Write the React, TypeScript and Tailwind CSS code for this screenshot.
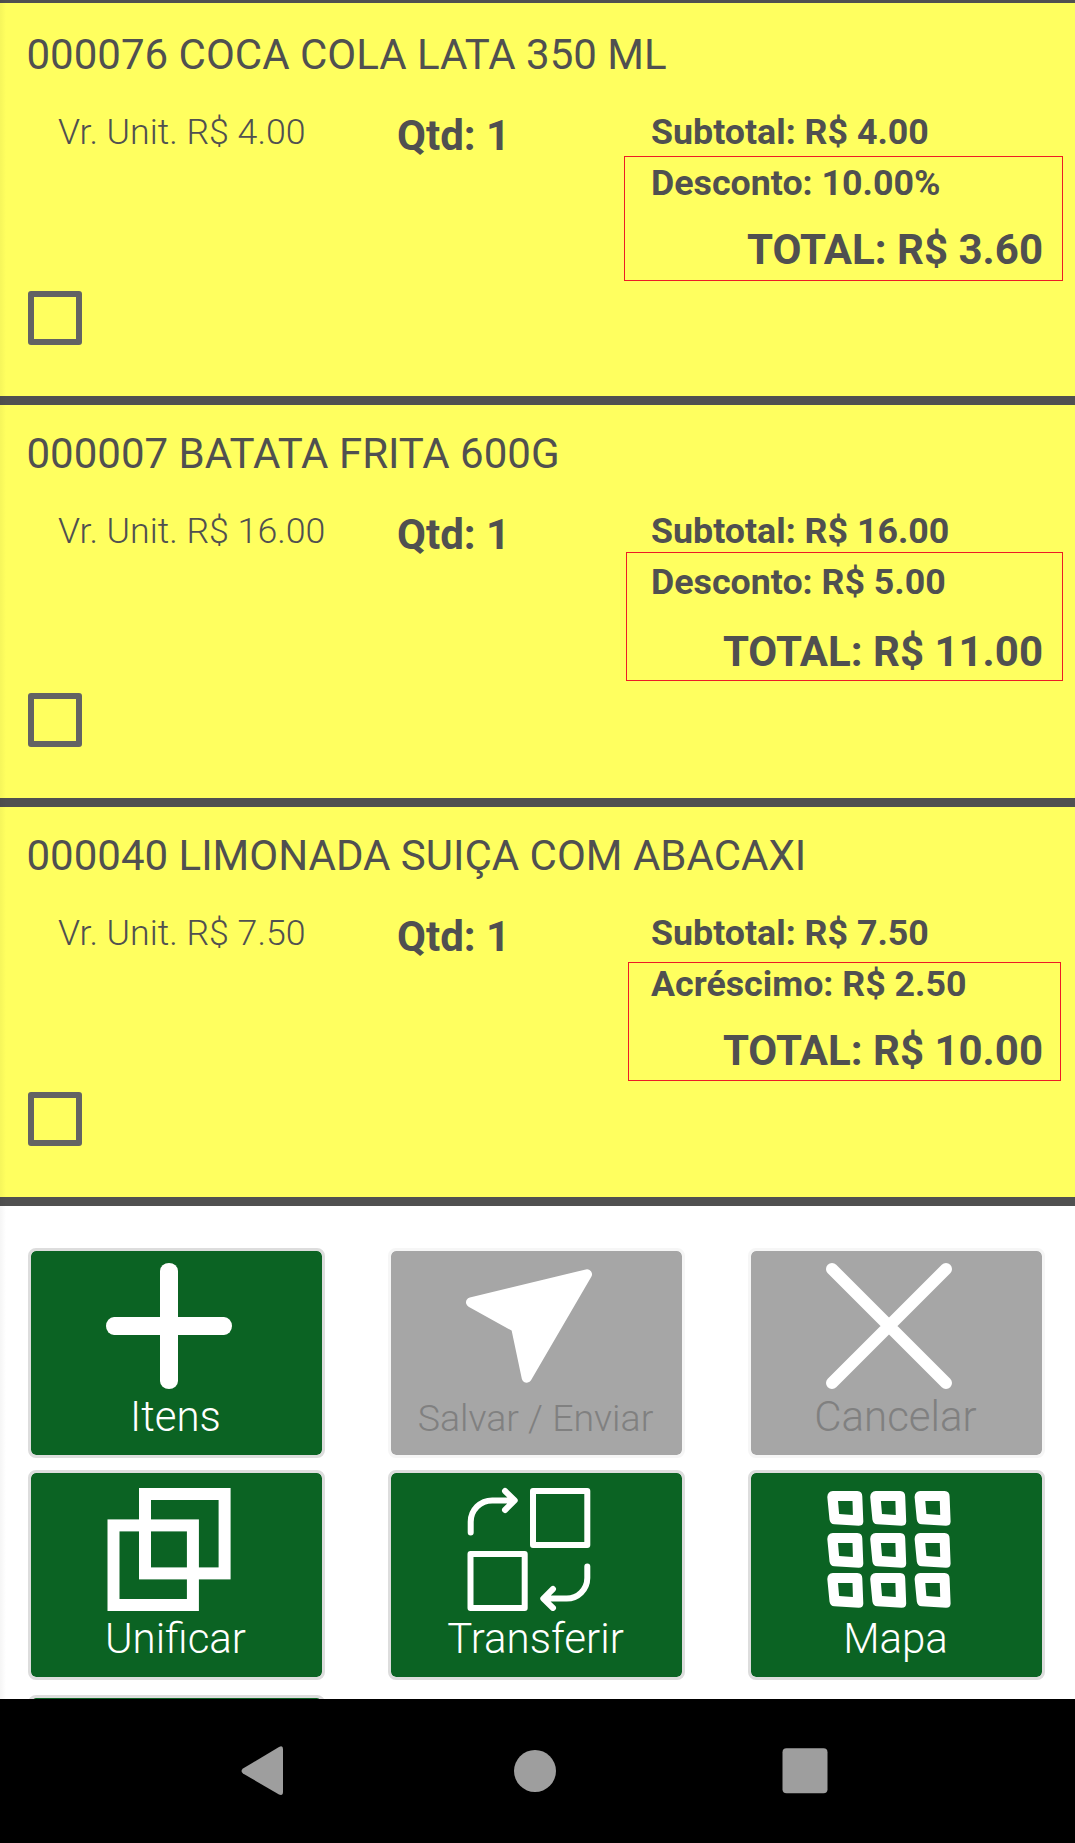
import type { ReactNode } from "react";
import clsx from "clsx";

type Item = {
  code: string;
  name: string;
  unit: string;
  qty: number;
  subtotal: string;
  adjust: string;
  total: string;
  row: string;
  totalGap: string;
  mark: string;
};

const ITEMS: Item[] = [
  {
    code: "000076", name: "COCA COLA LATA 350 ML", unit: "4.00", qty: 1, subtotal: "4.00",
    adjust: "Desconto: 10.00%", total: "3.60",
    row: "h-[402px] pt-[28px]", totalGap: "mt-[22px]",
    mark: "left-[624px] top-[153px] h-[125px] w-[439px]",
  },
  {
    code: "000007", name: "BATATA FRITA 600G", unit: "16.00", qty: 1, subtotal: "16.00",
    adjust: "Desconto: R$ 5.00", total: "11.00",
    row: "h-[402px] pt-[25px]", totalGap: "mt-[25px]",
    mark: "left-[626px] top-[147px] h-[129px] w-[437px]",
  },
  {
    code: "000040", name: "LIMONADA SUIÇA COM ABACAXI", unit: "7.50", qty: 1, subtotal: "7.50",
    adjust: "Acréscimo: R$ 2.50", total: "10.00",
    row: "h-[399px] pt-[25px]", totalGap: "mt-[22px]",
    mark: "left-[628px] top-[155px] h-[119px] w-[433px]",
  },
];

function ItemRow({ item }: { item: Item }) {
  return (
    <section className={clsx("relative flex flex-col border-b-[9px] border-[#505050] bg-[#ffff5f] pb-[51px] text-[#505050]", item.row)}>
      <h2 className="pl-[26.5px] text-[42px] leading-[48px] whitespace-nowrap">{item.code} {item.name}</h2>
      <div className="mt-[32px] grid grid-cols-[339px_254px_1fr] items-start pl-[58px] pr-[32px] whitespace-nowrap">
        <span className="text-[35.7px] leading-[42px] font-light">Vr. Unit. R$ {item.unit}</span>
        <span className="text-[42px] leading-[49px] font-bold">Qtd: {item.qty}</span>
        <div className="flex flex-col text-[35.75px] leading-[42px] font-bold">
          <span>Subtotal: R$ {item.subtotal}</span>
          <span className="mt-[9px]">{item.adjust}</span>
          <span className={clsx("text-right text-[42px] leading-[48px]", item.totalGap)}>TOTAL: R$ {item.total}</span>
        </div>
      </div>
      <span className="mt-auto ml-[28px] size-[54px] rounded-[3px] border-6 border-[#636363]" />
      <span className={clsx("absolute border border-[#ed1c24]", item.mark)} />
    </section>
  );
}

function Icon({ children, width = 6 }: { children: ReactNode; width?: number }) {
  return (
    <svg viewBox="0 0 126 126" className="ml-[75px] size-[126px] shrink-0 text-white" fill="none" stroke="currentColor"
      strokeWidth={width} strokeLinecap="round" strokeLinejoin="round">
      {children}
    </svg>
  );
}

const PlusIcon = () => (
  <Icon>
    <g fill="currentColor" stroke="none">
      <rect x="54" y="0" width="18" height="126" rx="9" ry="8" />
      <rect x="0" y="54" width="126" height="18" rx="8" ry="9" />
    </g>
  </Icon>
);

const SendIcon = () => (
  <Icon width={10}>
    <path d="M121 11.3 5 39.3 50.1 64.4 60.7 114.7Z" fill="currentColor" />
  </Icon>
);

const CloseIcon = () => (
  <Icon width={12}>
    <path d="M6 6 120 120M120 6 6 120" />
  </Icon>
);

const MergeIcon = () => (
  <Icon width={12}>
    <g strokeLinejoin="miter">
      <rect x="39" y="9" width="79.6" height="79.4" />
      <rect x="7.5" y="40.4" width="79.4" height="79.6" />
    </g>
  </Icon>
);

const TransferIcon = () => (
  <Icon>
    <rect x="67" y="6" width="54.3" height="54" />
    <rect x="4.5" y="69" width="54.2" height="54" />
    <path d="M4.7 47.5V37A21.5 21.5 0 0 1 26.2 15.4H48M39 6 48.7 15.4 39 25" />
    <path d="M121.3 81.5V93A20.7 20.7 0 0 1 100.6 113.6H78M87 104 77.3 113.6 87 123" />
  </Icon>
);

const MapIcon = () => (
  <Icon>
    {[6, 48, 88].map((y) =>
      [1.3, 44.2, 88.6].map((x) => (
        <path key={`${x}-${y}`} transform={`translate(${x} ${y})`} fill="currentColor" stroke="none" fillRule="evenodd"
          d="M5.5 0H30Q35 .3 35 5.5L36 30.5Q36 34.7 31.5 34.7L7 33.3Q3 33 2.2 28.5L0 6Q.3 .5 5.5 0ZM10.7 10 11.8 23 25.6 24 25.2 10Z" />
      ))
    )}
  </Icon>
);

type Action = { label: string; icon: ReactNode; disabled?: boolean; small?: boolean };

const ACTIONS: Action[] = [
  { label: "Itens", icon: <PlusIcon /> },
  { label: "Salvar / Enviar", icon: <SendIcon />, disabled: true, small: true },
  { label: "Cancelar", icon: <CloseIcon />, disabled: true },
  { label: "Unificar", icon: <MergeIcon /> },
  { label: "Transferir", icon: <TransferIcon /> },
  { label: "Mapa", icon: <MapIcon /> },
];

function ActionButton({ action }: { action: Action }) {
  return (
    <button
      disabled={action.disabled}
      className={clsx(
        "flex h-[210px] w-[297px] flex-col rounded-[8px] border-3 bg-clip-padding pt-[12px] font-light",
        action.disabled ? "border-[#f6f6f6] bg-[#a6a6a6] text-[#808080]" : "border-[#dddddd] bg-[#0b6323] text-white"
      )}
    >
      {action.icon}
      <span className={clsx("w-full pr-[2px] text-center leading-[48px] whitespace-nowrap", action.small ? "mt-[5px] text-[37.5px]" : "mt-[4px] text-[42px]")}>
        {action.label}
      </span>
    </button>
  );
}

export default function App() {
  return (
    <div className="relative flex h-[1843px] w-[1075px] flex-col overflow-hidden bg-white font-['Roboto',sans-serif]">
      <div className="h-[3px] shrink-0 bg-[#505050]" />
      {ITEMS.map((item) => <ItemRow key={item.code} item={item} />)}

      {/* ações */}
      <div className="h-[493px] shrink-0 overflow-hidden pt-[42px] pl-[28px]">
        <div className="grid grid-cols-[297px_297px_297px] gap-x-[63px] gap-y-[12px]">
          {ACTIONS.map((a) => <ActionButton key={a.label} action={a} />)}
        </div>
        <div className="mt-[15px] h-[210px] w-[297px] rounded-[8px] border-3 border-[#dddddd] bg-[#0b6323] bg-clip-padding" />
      </div>

      {/* barra de navegação */}
      <nav className="h-[144px] shrink-0 bg-black">
        <svg viewBox="0 0 1075 144" className="h-full w-full" fill="#9e9e9e">
          <path d="M243 69.5Q240 72 243 74.5L279 95.5Q283 97 283 93V50Q283 46 279 48Z" />
          <circle cx="535" cy="72" r="21" />
          <rect x="782.5" y="49.2" width="45" height="45" rx="4" />
        </svg>
      </nav>

      {/* sombra da gaveta lateral */}
      <div className="absolute top-0 left-0 h-[1699px] w-[6px] bg-linear-to-r from-black/4 to-transparent" />
    </div>
  );
}
